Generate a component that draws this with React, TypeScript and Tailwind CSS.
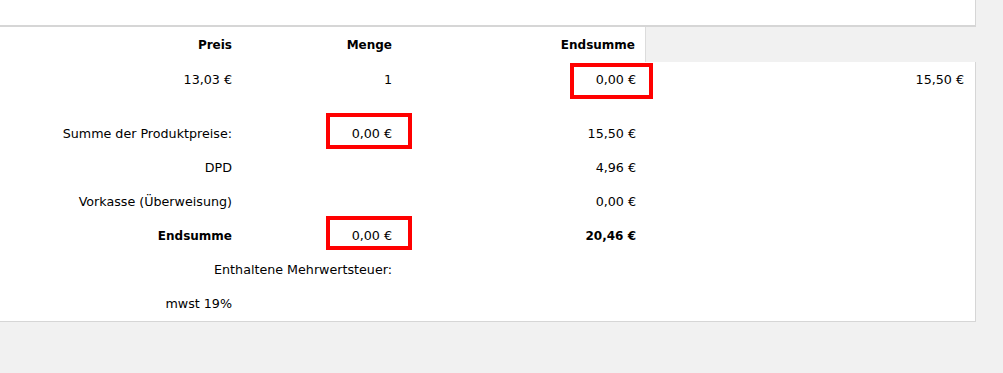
import React from "react";

interface SummaryRow {
  label: string;
  middle?: string;
  total?: string;
  bold?: boolean;
  marked?: boolean;
}

const summaryRows: SummaryRow[] = [
  { label: "Summe der Produktpreise:", middle: "0,00 €", total: "15,50 €", marked: true },
  { label: "DPD", total: "4,96 €" },
  { label: "Vorkasse (Überweisung)", total: "0,00 €" },
  { label: "Endsumme", middle: "0,00 €", total: "20,46 €", bold: true, marked: true },
  { label: "", middle: "Enthaltene Mehrwertsteuer:" },
  { label: "mwst 19%" },
];

const cols = "grid grid-cols-[242px_160px_244px_1fr]";

const Marker = ({ className }: { className: string }) => (
  <div className={`absolute border-4 border-[#ff0000] pointer-events-none ${className}`} />
);

const App = () => {
  return (
    <div
      className="w-[1003px] h-[373px] bg-[#f1f1f1] text-[12.7px] text-black"
      style={{ fontFamily: '"DejaVu Sans", Verdana, sans-serif' }}
    >
      <div className="w-[976px] h-[27px] bg-white border-b-2 border-r border-[#d6d6d6]" />

      {/* column headers */}
      <div className={`${cols} w-[976px] h-[35px] font-bold text-[12px]`}>
        <div className="bg-white flex items-center justify-end pr-[10px]">Preis</div>
        <div className="bg-white flex items-center justify-end pr-[10px]">Menge</div>
        <div className="bg-white flex items-center justify-end pr-[10px] border-r border-[#dcdcdc]">
          Endsumme
        </div>
        <div />
      </div>

      <div className="w-[976px] bg-white border-r border-b border-[#d6d6d6]">
        {/* product line */}
        <div className={`${cols} h-[35px]`}>
          <div className="flex items-center justify-end pr-[10px]">13,03 €</div>
          <div className="flex items-center justify-end pr-[10px]">1</div>
          <div className="relative flex items-center justify-end pr-[10px]">
            0,00 €
            <Marker className="left-[168px] top-[1px] w-[83px] h-[36px]" />
          </div>
          <div className="flex items-center justify-end pr-[11px]">15,50 €</div>
        </div>

        <div className="h-[20px]" />

        {summaryRows.map((row, idx) => (
          <div key={idx} className={`${cols} h-[34px]`}>
            <div
              className={`flex items-center justify-end pr-[10px] ${row.bold ? "font-bold text-[12px]" : ""}`}
            >
              {row.label}
            </div>
            <div className="relative flex items-center justify-end pr-[10px] whitespace-nowrap">
              {row.middle}
              {row.marked && (
                <Marker
                  className={
                    row.bold
                      ? "left-[84px] top-[-3px] w-[86px] h-[34px]"
                      : "left-[84px] top-[-4px] w-[86px] h-[36px]"
                  }
                />
              )}
            </div>
            <div
              className={`flex items-center justify-end pr-[10px] ${row.bold ? "font-bold text-[12px]" : ""}`}
            >
              {row.total}
            </div>
            <div />
          </div>
        ))}
      </div>
    </div>
  );
};

export default App;
